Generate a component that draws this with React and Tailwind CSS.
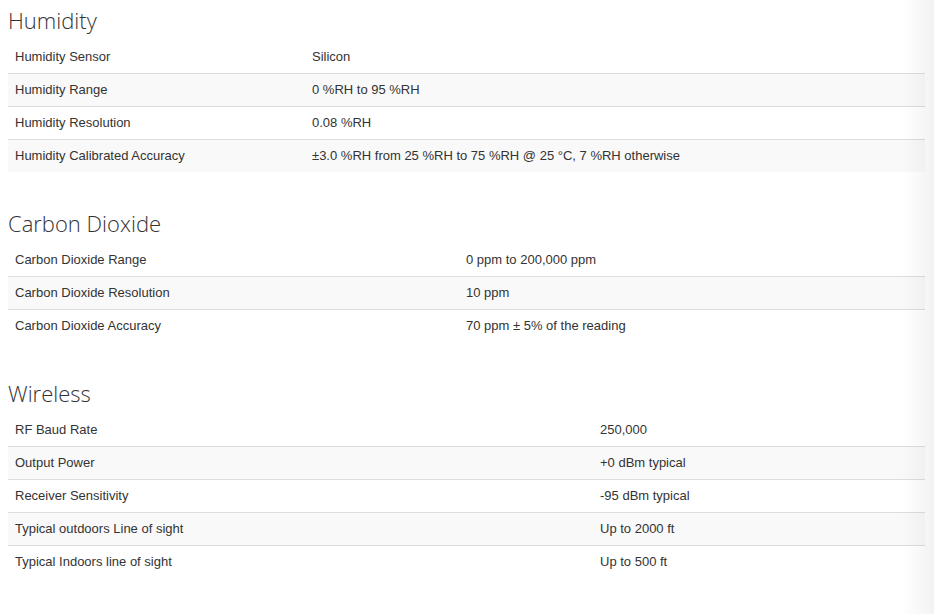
const sections = [
  {
    title: "Humidity",
    col: "grid-cols-[296px_1fr]",
    rows: [
      ["Humidity Sensor", "Silicon"],
      ["Humidity Range", "0 %RH to 95 %RH"],
      ["Humidity Resolution", "0.08 %RH"],
      [
        "Humidity Calibrated Accuracy",
        "±3.0 %RH from 25 %RH to 75 %RH @ 25 °C, 7 %RH otherwise",
      ],
    ],
  },
  {
    title: "Carbon Dioxide",
    col: "grid-cols-[450px_1fr]",
    rows: [
      ["Carbon Dioxide Range", "0 ppm to 200,000 ppm"],
      ["Carbon Dioxide Resolution", "10 ppm"],
      ["Carbon Dioxide Accuracy", "70 ppm ± 5% of the reading"],
    ],
  },
  {
    title: "Wireless",
    col: "grid-cols-[584px_1fr]",
    rows: [
      ["RF Baud Rate", "250,000"],
      ["Output Power", "+0 dBm typical"],
      ["Receiver Sensitivity", "-95 dBm typical"],
      ["Typical outdoors Line of sight", "Up to 2000 ft"],
      ["Typical Indoors line of sight", "Up to 500 ft"],
    ],
  },
];

function SpecTable({ title, col, rows }) {
  return (
    <div className="mb-[39px]">
      <h3 className="font-['Open_Sans',sans-serif] text-[22px] font-light leading-[24px] text-[#333] mb-[9px]">
        {title}
      </h3>
      <div className="font-['Liberation_Sans',Arial,sans-serif] text-[13px] leading-[16px] text-[#333]">
        {rows.map((r, i) => (
          <div
            key={i}
            className={`grid ${col} ${i > 0 ? "border-t border-[#ddd]" : ""} ${
              i % 2 === 1 ? "bg-[#f9f9f9]" : ""
            }`}
          >
            <div className="py-2 pl-[7px] pr-2">{r[0]}</div>
            <div className="p-2">{r[1]}</div>
          </div>
        ))}
      </div>
    </div>
  );
}

export default function App() {
  return (
    <div className="relative min-h-[614px] bg-white">
      <div className="w-[917px] ml-2 pt-2">
        {sections.map((s) => (
          <SpecTable key={s.title} {...s} />
        ))}
      </div>
      <div className="pointer-events-none absolute right-0 top-0 h-full w-[32px] bg-gradient-to-r from-transparent to-black/[0.05]" />
    </div>
  );
}
